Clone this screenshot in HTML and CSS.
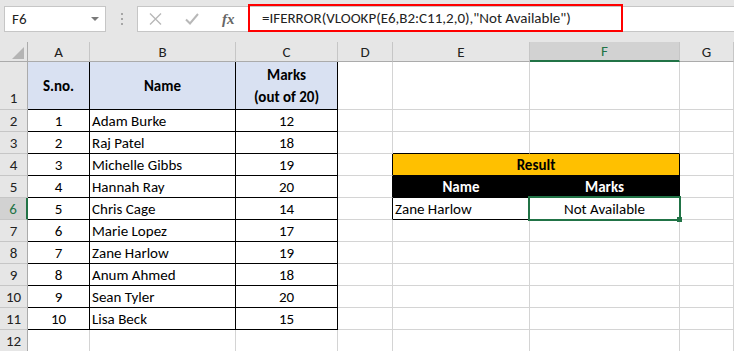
FILE: index.html
```html
<!DOCTYPE html>
<html>
<head>
<meta charset="utf-8">
<link rel="stylesheet" href="styles.css">
</head>
<body>
<div class="toolbar">
  <div class="namebox"><span>F6</span><span class="caret"></span></div>
  <div class="dots"><i></i><i></i><i></i></div>
  <div class="fxgroup">
    <svg class="ico" width="13" height="12" viewBox="0 0 13 12"><path d="M1 0.5 L12 11.5 M12 0.5 L1 11.5" stroke="#b8b8b8" stroke-width="1.4" fill="none"/></svg>
    <svg class="ico" width="14" height="12" viewBox="0 0 14 12"><path d="M1 6.5 L5 10.5 L13 1" stroke="#b8b8b8" stroke-width="2" fill="none"/></svg>
    <span class="fx">fx</span>
  </div>
  <div class="formula"><div class="hl">=IFERROR(VLOOKP(E6,B2:C11,2,0),"Not Available")</div></div>
</div>
<div class="sheet">
  <div class="cell hd corner"><svg width="12" height="12" viewBox="0 0 12 12"><path d="M12 0 L12 12 L0 12 Z" fill="#b4b4b4"/></svg></div>
  <div class="cell hd">A</div><div class="cell hd">B</div><div class="cell hd">C</div><div class="cell hd">D</div><div class="cell hd">E</div><div class="cell hd selc">F</div><div class="cell hd">G</div>

  <div class="cell rh bottom">1</div>
  <div class="cell t th">S.no.</div><div class="cell t th">Name</div><div class="cell t th two">Marks<br>(out of 20)</div><div class="cell"></div><div class="cell"></div><div class="cell"></div><div class="cell"></div>

  <div class="cell rh">2</div><div class="cell t">1</div><div class="cell t l">Adam Burke</div><div class="cell t">12</div><div class="cell"></div><div class="cell"></div><div class="cell"></div><div class="cell"></div>
  <div class="cell rh">3</div><div class="cell t">2</div><div class="cell t l">Raj Patel</div><div class="cell t">18</div><div class="cell"></div><div class="cell bb"></div><div class="cell bb"></div><div class="cell"></div>
  <div class="cell rh">4</div><div class="cell t">3</div><div class="cell t l">Michelle Gibbs</div><div class="cell t">19</div><div class="cell br"></div><div class="cell t res span2">Result</div><div class="cell"></div>
  <div class="cell rh">5</div><div class="cell t">4</div><div class="cell t l">Hannah Ray</div><div class="cell t">20</div><div class="cell br"></div><div class="cell t blk">Name</div><div class="cell t blk">Marks</div><div class="cell"></div>
  <div class="cell rh selr">6</div><div class="cell t">5</div><div class="cell t l">Chris Cage</div><div class="cell t">14</div><div class="cell br"></div><div class="cell t l">Zane Harlow</div><div class="cell t active">Not Available</div><div class="cell"></div>
  <div class="cell rh">7</div><div class="cell t">6</div><div class="cell t l">Marie Lopez</div><div class="cell t">17</div><div class="cell"></div><div class="cell"></div><div class="cell"></div><div class="cell"></div>
  <div class="cell rh">8</div><div class="cell t">7</div><div class="cell t l">Zane Harlow</div><div class="cell t">19</div><div class="cell"></div><div class="cell"></div><div class="cell"></div><div class="cell"></div>
  <div class="cell rh">9</div><div class="cell t">8</div><div class="cell t l">Anum Ahmed</div><div class="cell t">18</div><div class="cell"></div><div class="cell"></div><div class="cell"></div><div class="cell"></div>
  <div class="cell rh">10</div><div class="cell t">9</div><div class="cell t l">Sean Tyler</div><div class="cell t">20</div><div class="cell"></div><div class="cell"></div><div class="cell"></div><div class="cell"></div>
  <div class="cell rh">11</div><div class="cell t">10</div><div class="cell t l">Lisa Beck</div><div class="cell t">15</div><div class="cell"></div><div class="cell"></div><div class="cell"></div><div class="cell"></div>
  <div class="cell rh">12</div><div class="cell"></div><div class="cell"></div><div class="cell"></div><div class="cell"></div><div class="cell"></div><div class="cell"></div><div class="cell"></div>
</div>
</body>
</html>
```
FILE: styles.css
```css
* { box-sizing: border-box; }
body {
  margin: 0;
  font-family: Calibri, Carlito, Lato, "Open Sans", sans-serif;
  font-size: 15px;
  color: #000;
  background: #fff;
  overflow: hidden;
}
.toolbar {
  display: flex;
  align-items: flex-start;
  height: 42px;
  padding-top: 6px;
  background: #e6e6e6;
}
.namebox {
  margin-left: 4px;
  width: 102px;
  height: 26px;
  background: #fff;
  border: 1px solid #c6c6c6;
  display: flex;
  align-items: center;
  justify-content: space-between;
  padding: 0 6px 0 7px;
  color: #222;
}
.caret {
  width: 0;
  height: 0;
  border-left: 4px solid transparent;
  border-right: 4px solid transparent;
  border-top: 4px solid #7a7a7a;
}
.dots {
  width: 31px;
  height: 26px;
  display: flex;
  flex-direction: column;
  align-items: center;
  justify-content: center;
  gap: 3px;
}
.dots i {
  display: block;
  width: 2px;
  height: 2px;
  background: #a6a6a6;
}
.fxgroup {
  width: 111px;
  height: 26px;
  background: #fff;
  border: 1px solid #c6c6c6;
  border-right: none;
  display: flex;
  align-items: center;
  padding-left: 11px;
  gap: 23px;
}
.ico { display: block; }
.fx {
  font-family: "Liberation Serif", serif;
  font-style: italic;
  font-weight: bold;
  font-size: 15px;
  color: #666;
  margin-left: 0;
}
.formula {
  flex: 1;
  height: 26px;
  background: #fff;
  border-top: 1px solid #c6c6c6;
  border-bottom: 1px solid #c6c6c6;
}
.hl {
  margin-top: -3px;
  width: 375px;
  height: 28px;
  border: 2px solid #f00;
  padding-left: 12px;
  display: flex;
  align-items: center;
  color: #222;
  white-space: nowrap;
}
.sheet {
  display: grid;
  grid-template-columns: 28px 62px 146px 102px 55px 137px 150px 1fr;
  grid-template-rows: 20px 48px repeat(11, 22px);
}
.cell {
  border-right: 1px solid #d4d4d4;
  border-bottom: 1px solid #d4d4d4;
  display: flex;
  align-items: center;
  justify-content: center;
  white-space: nowrap;
  color: #000;
}
.sheet .hd {
  background: #e6e6e6;
  border-right-color: #c6c6c6;
  border-bottom-color: #ababab;
  color: #222;
}
.sheet .corner {
  justify-content: flex-end;
  align-items: flex-end;
  padding: 0 3px 2px 0;
  border-right-color: #ababab;
}
.sheet .selc {
  background: #d2d2d2;
  color: #217346;
  border-bottom: 2px solid #217346;
}
.sheet .rh {
  background: #e6e6e6;
  border-right-color: #ababab;
  border-bottom-color: #c6c6c6;
  color: #222;
}
.sheet .bottom {
  align-items: flex-end;
  padding-bottom: 2px;
}
.sheet .selr {
  background: #d2d2d2;
  color: #217346;
  border-right: 2px solid #217346;
}
.sheet .t {
  border-right-color: #000;
  border-bottom-color: #000;
}
.sheet .br { border-right-color: #000; }
.sheet .bb { border-bottom-color: #000; }
.th {
  background: #d9e1f2;
  font-weight: bold;
}
.two {
  text-align: center;
  line-height: 22px;
}
.sheet .l {
  justify-content: flex-start;
  padding-left: 2px;
}
.span2 { grid-column: span 2; }
.res {
  background: #ffc000;
  font-weight: bold;
}
.blk {
  background: #000;
  color: #fff;
  font-weight: bold;
}
.sheet .blk { color: #fff; }
.active { position: relative; }
.active::after {
  content: "";
  position: absolute;
  left: -2px;
  top: -2px;
  right: -2px;
  bottom: -2px;
  border: 2px solid #217346;
}
.active::before {
  content: "";
  position: absolute;
  right: -3px;
  bottom: -3px;
  width: 5px;
  height: 5px;
  background: #217346;
  z-index: 2;
}
```
